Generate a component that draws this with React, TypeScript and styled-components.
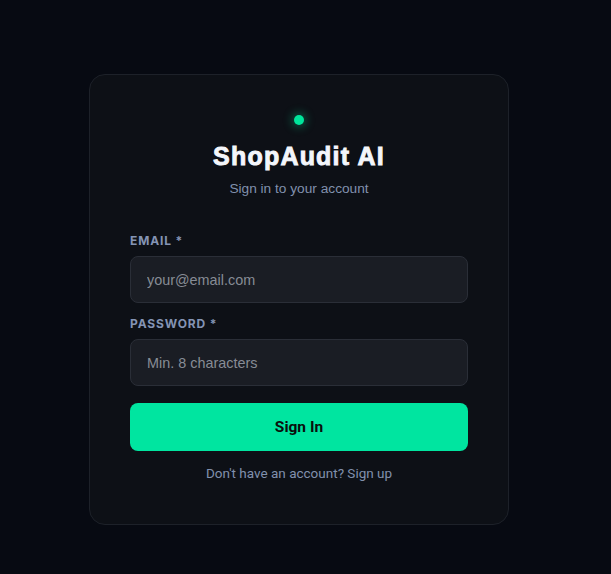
import React from "react";
import styled, { createGlobalStyle } from "styled-components";

const Global = createGlobalStyle`
  html, body { margin: 0; padding: 0; background: #070a12; }
  body { font-family: "Liberation Sans", Arial, sans-serif; }
  * { box-sizing: border-box; }
`;

const Page = styled.div`
  min-height: 574px;
  display: flex;
  justify-content: center;
  padding: 74px 13px 0 0;
  background: #070a12;
`;

const Card = styled.form`
  width: 420px;
  height: 451px;
  background: #0d1016;
  border: 1px solid #1d2129;
  border-radius: 16px;
  padding: 40px 40px;
  display: flex;
  flex-direction: column;
`;

const Header = styled.div`
  display: flex;
  flex-direction: column;
  align-items: center;
`;

const Dot = styled.span`
  width: 10px;
  height: 10px;
  border-radius: 50%;
  background: #00e59b;
  box-shadow: 0 0 10px 2px rgba(0, 229, 155, 0.35);
`;

const Title = styled.h1`
  margin: 16px 0 0;
  font-family: "Liberation Sans", Arial, sans-serif;
  font-weight: 700;
  font-size: 25px;
  line-height: 30px;
  color: #f4f6fb;
  letter-spacing: 1.2px;
  -webkit-text-stroke: 0.9px #f4f6fb;
`;

const Subtitle = styled.p`
  margin: 8px 0 0;
  font-size: 13.7px;
  line-height: 20px;
  color: #8190ad;
`;

const Field = styled.div<{ $top: number }>`
  display: flex;
  flex-direction: column;
  margin-top: ${(p) => p.$top}px;
`;

const Label = styled.label`
  font-family: Inter, "Liberation Sans", sans-serif;
  font-size: 12px;
  line-height: 16px;
  font-weight: 700;
  letter-spacing: 0.85px;
  color: #8494b4;
  text-transform: uppercase;
  margin-bottom: 7px;
`;

const Input = styled.input`
  height: 47px;
  width: 100%;
  background: #1a1d24;
  border: 1px solid #2a2e37;
  border-radius: 8px;
  padding: 0 16px;
  font-family: "Liberation Sans", Arial, sans-serif;
  font-size: 14.4px;
  color: #e6e9ef;
  outline: none;
  &::placeholder { color: #878c95; }
`;

const Button = styled.button`
  margin-top: 17px;
  height: 48px;
  width: 100%;
  border: none;
  border-radius: 8px;
  background: #00e5a0;
  color: #0a0f0c;
  font-family: Roboto, "Liberation Sans", sans-serif;
  font-weight: 700;
  font-size: 15.5px;
  cursor: pointer;
`;

const Footer = styled.p`
  margin: 12px 0 0;
  text-align: center;
  font-family: Roboto, "Liberation Sans", sans-serif;
  font-size: 13.5px;
  line-height: 20px;
  color: #8190ad;
`;

export default function App() {
  return (
    <>
      <Global />
      <Page>
        <Card onSubmit={(e) => e.preventDefault()}>
          <Header>
            <Dot />
            <Title>ShopAudit AI</Title>
            <Subtitle>Sign in to your account</Subtitle>
          </Header>
          <Field $top={34}>
            <Label>Email *</Label>
            <Input type="email" placeholder="your@email.com" />
          </Field>
          <Field $top={13}>
            <Label>Password *</Label>
            <Input type="password" placeholder="Min. 8 characters" />
          </Field>
          <Button type="submit">Sign In</Button>
          <Footer>Don't have an account? Sign up</Footer>
        </Card>
      </Page>
    </>
  );
}
